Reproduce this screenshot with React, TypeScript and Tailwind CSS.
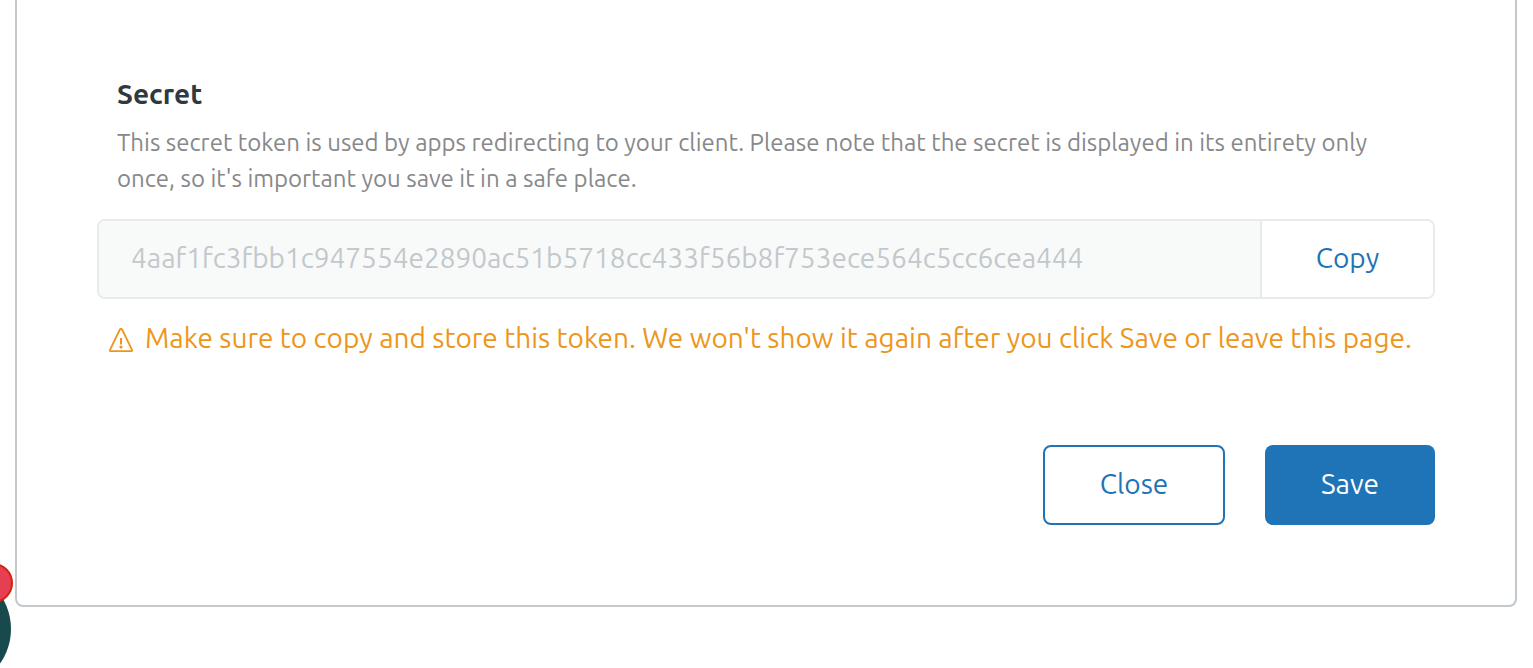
import { useState } from "react";

const TOKEN = "4aaf1fc3fbb1c947554e2890ac51b5718cc433f56b8f753ece564c5cc6cea444";

function WarningIcon() {
  return (
    <svg
      className="mt-2.5 h-6 w-6 shrink-0"
      viewBox="0 0 24 24"
      fill="none"
      stroke="currentColor"
      aria-hidden="true"
    >
      <path
        d="M10.9 1.5a1.25 1.25 0 0 1 2.2 0L23 21.9a.8.8 0 0 1-.7 1.2H1.7a.8.8 0 0 1-.7-1.2z"
        strokeWidth="1.8"
        strokeLinejoin="round"
      />
      <path d="M12 10v6.4" strokeWidth="2" />
      <circle cx="12" cy="19" r="1.6" fill="currentColor" stroke="none" />
    </svg>
  );
}

function SecretField() {
  const [copied, setCopied] = useState(false);
  const copy = () => {
    navigator.clipboard?.writeText(TOKEN).then(() => setCopied(true), () => undefined);
  };
  return (
    <div className="flex h-20 overflow-hidden rounded-lg border-2 border-[#e9ebeb]">
      <input
        id="secret"
        aria-describedby="secret-help"
        readOnly
        value={TOKEN}
        className="min-w-0 flex-1 bg-[#f8faf9] px-8 pb-0.5 text-[28px] text-[#c2c8cc] outline-none"
      />
      <button
        type="button"
        onClick={copy}
        data-copied={copied}
        className="w-[173px] border-l-2 border-[#e9ebeb] bg-white pb-0.5 text-[28px] text-[#1f73b7]"
      >
        Copy
      </button>
    </div>
  );
}

function ProfileBubble() {
  return (
    <div aria-hidden="true">
      <div className="fixed bottom-[-21px] left-[-109px] size-[120px] rounded-full bg-[#17494d]" />
      <div className="fixed bottom-[65px] left-[-27px] size-10 rounded-full border-2 border-[#d1250f] bg-[#e63f54]" />
    </div>
  );
}

export default function App() {
  return (
    <main className="min-h-screen overflow-x-hidden bg-white pr-4 pb-14 pl-[15px] font-['Ubuntu','Noto_Sans',sans-serif] font-[440]">
      <form
        onSubmit={(event) => event.preventDefault()}
        className="rounded-b-lg border-2 border-t-0 border-[#c2c8cc] px-20 pt-[76px] pb-20"
      >
        <div className="px-5">
          <label htmlFor="secret" className="block text-[28px] leading-9 font-bold text-[#2f3941]">
            Secret
          </label>
          <p id="secret-help" className="mt-[13px] mb-[22px] text-[24px] leading-9 text-[#87888a]">
            This secret token is used by apps redirecting to your client. Please note that the
            secret is displayed in its entirety only once, so it's important you save it in a safe
            place.
          </p>
        </div>
        <SecretField />
        <p className="mt-[19px] flex items-start gap-3 pl-3 text-[28px] leading-10 text-[#ed961c]">
          <WarningIcon />
          <span>
            Make sure to copy and store this token. We won't show it again after you click Save or
            leave this page.
          </span>
        </p>
        <div className="mt-[87px] flex justify-end gap-10 text-[28px]">
          <button
            type="button"
            className="h-20 w-[182px] rounded-lg border-2 border-[#1f73b7] bg-white pb-0.5 text-[#1f73b7]"
          >
            Close
          </button>
          <button type="submit" className="h-20 w-[170px] rounded-lg bg-[#1f73b7] pb-0.5 text-white">
            Save
          </button>
        </div>
      </form>
      <ProfileBubble />
    </main>
  );
}
